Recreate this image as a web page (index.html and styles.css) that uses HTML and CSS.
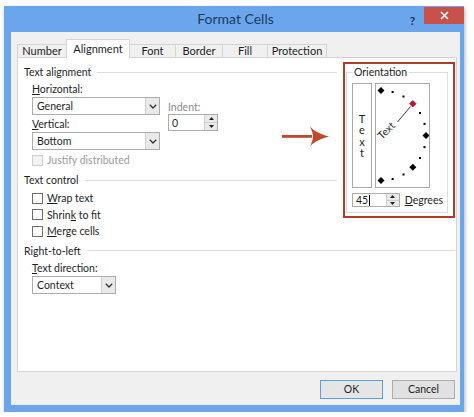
FILE: index.html
```html
<!DOCTYPE html>
<html>
<head>
<meta charset="utf-8">
<link rel="stylesheet" href="styles.css">
</head>
<body>
<div class="window">
  <div class="titlebar">
    <div class="title">Format Cells</div>
    <div class="help">?</div>
    <div class="close">
      <svg width="9" height="9" viewBox="0 0 9 9"><path d="M1 1L8 8M8 1L1 8" stroke="#fff" stroke-width="1.6"/></svg>
    </div>
  </div>
  <div class="client">
    <div class="tabs">
      <div class="tab t-number">Number</div>
      <div class="tab active t-align">Alignment</div>
      <div class="tab after-active t-font">Font</div>
      <div class="tab t-border">Border</div>
      <div class="tab t-fill">Fill</div>
      <div class="tab last t-prot">Protection</div>
    </div>
    <div class="panel">
      <div class="top">
        <div class="leftcol">
          <div class="legend"><span>Text alignment</span><i class="rule"></i></div>
          <div class="align-grid">
            <div class="subcol">
              <div class="lbl"><u>H</u>orizontal:</div>
              <div class="select w-wide"><span class="val">General</span><span class="dd"><svg width="8" height="5" viewBox="0 0 8 5"><path d="M0.8 0.8L4 4L7.2 0.8" fill="none" stroke="#333" stroke-width="1.3"/></svg></span></div>
              <div class="lbl gap1"><u>V</u>ertical:</div>
              <div class="select w-wide"><span class="val">Bottom</span><span class="dd"><svg width="8" height="5" viewBox="0 0 8 5"><path d="M0.8 0.8L4 4L7.2 0.8" fill="none" stroke="#333" stroke-width="1.3"/></svg></span></div>
            </div>
            <div class="indent">
              <div class="lbl dim">Indent:</div>
              <div class="spin w-indent">
                <span class="val">0</span>
                <span class="arrows"><span class="up"><svg width="5" height="3" viewBox="0 0 5 3"><path d="M0 3L2.5 0L5 3Z" fill="#222"/></svg></span><span class="down"><svg width="5" height="3" viewBox="0 0 5 3"><path d="M0 0L2.5 3L5 0Z" fill="#222"/></svg></span></span>
              </div>
            </div>
          </div>
          <div class="check disabled"><span class="box"></span><span>Justify distributed</span></div>
          <div class="legend mt4"><span>Text control</span><i class="rule"></i></div>
          <div class="checks">
            <div class="check"><span class="box"></span><span><u>W</u>rap text</span></div>
            <div class="check"><span class="box"></span><span>Shrin<u>k</u> to fit</span></div>
            <div class="check"><span class="box"></span><span><u>M</u>erge cells</span></div>
          </div>
        </div>
        <div class="highlight">
          <fieldset class="orient">
            <legend>Orientation</legend>
            <div class="orient-body">
              <div class="vtext"><span>T</span><span>e</span><span>x</span><span>t</span></div>
              <div class="dial">
                <svg width="53" height="103" viewBox="1 1 53 103">
                  <g fill="#000">
                    <polygon points="6,4 9.5,7.5 6,11 2.5,7.5"/>
                    <rect x="16.6" y="8" width="2" height="2"/>
                    <rect x="27.5" y="12.5" width="2" height="2"/>
                    <rect x="44" y="29" width="2" height="2"/>
                    <rect x="48.5" y="39.9" width="2" height="2"/>
                    <polygon points="51,49 54.5,52.5 51,56 47.5,52.5"/>
                    <rect x="48.5" y="63.1" width="2" height="2"/>
                    <rect x="44" y="74" width="2" height="2"/>
                    <polygon points="37.8,80.8 41.3,84.3 37.8,87.8 34.3,84.3"/>
                    <rect x="27.5" y="90.5" width="2" height="2"/>
                    <rect x="16.6" y="95" width="2" height="2"/>
                    <polygon points="6,94 9.5,97.5 6,101 2.5,97.5"/>
                  </g>
                  <polygon points="37.8,17.4 41.1,20.7 37.8,24 34.5,20.7" fill="#c8102e" stroke="#7a0a1c" stroke-width="0.6"/>
                  <line x1="22.5" y1="39" x2="35.5" y2="23.5" stroke="#222" stroke-width="0.9"/>
                  <text x="7" y="57" transform="rotate(-45 7 57)" class="dialtext">Text</text>
                </svg>
              </div>
            </div>
            <div class="deg-row">
              <div class="spin w-deg">
                <span class="val">45<i class="caret"></i></span>
                <span class="arrows"><span class="up"><svg width="5" height="3" viewBox="0 0 5 3"><path d="M0 3L2.5 0L5 3Z" fill="#222"/></svg></span><span class="down"><svg width="5" height="3" viewBox="0 0 5 3"><path d="M0 0L2.5 3L5 0Z" fill="#222"/></svg></span></span>
              </div>
              <span class="deg-lbl"><u>D</u>egrees</span>
            </div>
          </fieldset>
        </div>
      </div>
      <div class="legend rtl"><span>Right-to-left</span><i class="rule"></i></div>
      <div class="lbl indent-lbl"><u>T</u>ext direction:</div>
      <div class="select w-ctx indent-sel"><span class="val">Context</span><span class="dd"><svg width="8" height="5" viewBox="0 0 8 5"><path d="M0.8 0.8L4 4L7.2 0.8" fill="none" stroke="#333" stroke-width="1.3"/></svg></span></div>
      <svg class="arrow" width="47" height="21" viewBox="0 0 47 21">
        <path d="M0 9H30V11.8H0Z" fill="#c0472c"/>
        <path d="M28 0.5Q33 7 47 10.4Q33 14 28 20.5Q31 14 31 10.4Q31 7 28 0.5Z" fill="#c0472c"/>
      </svg>
    </div>
    <div class="buttons">
      <div class="btn default">OK</div>
      <div class="btn">Cancel</div>
    </div>
  </div>
</div>
</body>
</html>
```
FILE: styles.css
```css
html, body {
  margin: 0;
  padding: 0;
  background: #ffffff;
}
body {
  font-family: Lato, "Liberation Sans", sans-serif;
  font-size: 10.5px;
  color: #1e1e1e;
}
u { text-decoration: underline; text-underline-offset: 1px; }

.window {
  margin: 6px 0 0 4px;
  width: 460px;
  height: 406px;
  box-sizing: border-box;
  background: #6ba6ec;
  padding: 0 4px 7px 7px;
  box-shadow: 1px 2px 4px rgba(0,0,0,0.3);
  display: flex;
  flex-direction: column;
}
.titlebar {
  height: 26px;
  display: flex;
  align-items: flex-start;
  margin-right: -4px;
}
.title {
  flex: 1;
  padding-left: 55px;
  text-align: center;
  font-size: 14px;
  line-height: 26px;
  color: #1d3a63;
}
.help {
  width: 15px;
  margin-top: 7px;
  margin-right: 4px;
  font-size: 12px;
  font-weight: bold;
  line-height: 16px;
  text-align: center;
  color: #1b355c;
}
.close {
  width: 40px;
  height: 17px;
  margin-top: 1px;
  background: #c9514c;
  display: flex;
  align-items: center;
  justify-content: center;
}
.close svg { display: block; }

.client {
  flex: 1;
  background: #f0f0f0;
  padding: 7px 3px 6px 6px;
  display: flex;
  flex-direction: column;
}

/* tabs */
.tabs {
  display: flex;
  height: 18px;
  position: relative;
  z-index: 1;
}
.tab {
  box-sizing: border-box;
  margin-top: 5px;
  height: 13px;
  border-top: 1px solid #d4d4d4;
  border-left: 1px solid #d4d4d4;
  background: #f0f0f0;
  text-align: center;
  line-height: 11px;
  font-size: 11px;
  color: #1e1e1e;
}
.tab.active {
  margin-top: 0;
  height: 19px;
  background: #ffffff;
  border-right: 1px solid #d4d4d4;
  line-height: 17px;
}
.tab.after-active { border-left: none; }
.tab.last { border-right: 1px solid #d4d4d4; }
.t-number { width: 49px; }
.t-align { width: 64px; }
.t-font { width: 45px; }
.t-border { width: 47px; }
.t-fill { width: 45px; }
.t-prot { width: 60px; }

.panel {
  position: relative;
  height: 315px;
  box-sizing: border-box;
  border: 1px solid #d4d4d4;
  background: #ffffff;
  padding: 6px 1px 0 6px;
}
.top {
  display: flex;
  gap: 6px;
  align-items: flex-start;
}
.leftcol { width: 313px; }

.legend {
  display: flex;
  align-items: center;
  height: 16px;
  line-height: 16px;
  color: #1e1e1e;
}
.legend .rule {
  flex: 1;
  height: 1px;
  background: #dcdcdc;
  margin-left: 6px;
}
.mt4 { margin-top: 4px; }

.lbl {
  height: 16px;
  line-height: 16px;
}
.lbl.dim { color: #8a8a8a; }
.gap1 { margin-top: 1px; }

.align-grid {
  display: flex;
  gap: 8px;
  margin-top: 1px;
  padding-left: 8px;
}
.indent { margin-top: 18px; }
.indent .spin { margin-top: -1px; }

.select {
  box-sizing: border-box;
  height: 18px;
  border: 1px solid #acacac;
  background: #ffffff;
  display: flex;
  align-items: stretch;
}
.select .val {
  flex: 1;
  padding-left: 4px;
  line-height: 16px;
}
.select .dd {
  width: 13px;
  border-left: 1px solid #d0d0d0;
  background: #e9e9e9;
  display: flex;
  align-items: center;
  justify-content: center;
}
.select .dd svg { display: block; }
.w-wide { width: 128px; }
.w-ctx { width: 84px; }

.spin {
  box-sizing: border-box;
  border: 1px solid #acacac;
  background: #ffffff;
  display: flex;
  align-items: stretch;
}
.spin .val {
  flex: 1;
  padding-left: 3px;
  display: flex;
  align-items: center;
}
.spin .arrows {
  width: 12px;
  border-left: 1px solid #d0d0d0;
  background: #e9e9e9;
  display: flex;
  flex-direction: column;
}
.spin .arrows span {
  flex: 1;
  display: flex;
  align-items: center;
  justify-content: center;
}
.spin .arrows .up { border-bottom: 1px solid #d0d0d0; }
.spin .arrows svg { display: block; }
.w-indent { width: 50px; height: 17px; }
.w-deg { width: 48px; height: 14px; }
.caret {
  display: inline-block;
  width: 1px;
  height: 11px;
  background: #000;
  margin-left: 1px;
}

.check {
  display: flex;
  align-items: center;
  gap: 4px;
  height: 16.5px;
  padding-left: 8px;
}
.check .box {
  box-sizing: border-box;
  width: 11px;
  height: 11px;
  border: 1px solid #6f6f6f;
  background: #ffffff;
}
.check.disabled {
  margin-top: 2px;
  height: 16px;
  color: #9a9a9a;
}
.check.disabled .box {
  border-color: #cfcfcf;
  background: #f3f3f3;
}
.checks { margin-top: 2px; }

/* orientation */
.highlight {
  width: 112px;
  height: 156px;
  box-sizing: border-box;
  margin-top: -2px;
  border: 2px solid #b03c28;
}
.orient {
  margin: 0 5px 0 1px;
  padding: 3px 4px 4px 5px;
  border: 1px solid #dcdcdc;
  min-width: 0;
  height: 149px;
  box-sizing: border-box;
}
.orient legend {
  padding: 0 2px 0 1px;
  margin-left: 1px;
  line-height: 16px;
  color: #1e1e1e;
}
.orient-body {
  display: flex;
  gap: 3px;
}
.vtext {
  box-sizing: border-box;
  width: 20px;
  height: 105px;
  border: 1px solid #a9a9a9;
  display: flex;
  flex-direction: column;
  align-items: center;
  justify-content: center;
  line-height: 11.5px;
  font-size: 11px;
  color: #1e1e1e;
}
.dial {
  box-sizing: border-box;
  width: 55px;
  height: 105px;
  border: 1px solid #a9a9a9;
}
.dial svg { display: block; }
.dialtext {
  font-family: Lato, "Liberation Sans", sans-serif;
  font-size: 10.5px;
  fill: #222;
}
.deg-row {
  display: flex;
  align-items: center;
  gap: 5px;
  margin-top: 5px;
}
.deg-lbl { line-height: 14px; }

.rtl { margin-top: 3px; }
.indent-lbl { margin-top: 1.5px; padding-left: 8px; }
.indent-sel { margin-left: 8px; }

.arrow {
  position: absolute;
  left: 264px;
  top: 68px;
  display: block;
}

.buttons {
  display: flex;
  justify-content: flex-end;
  gap: 9px;
  margin-top: 8px;
  padding-right: 2px;
}
.btn {
  box-sizing: border-box;
  width: 63px;
  height: 19px;
  border: 1px solid #adadad;
  background: #e1e1e1;
  text-align: center;
  line-height: 17px;
  color: #1e1e1e;
}
.btn.default {
  border-color: #5a9fe0;
  background: #e5e5e5;
}
```
